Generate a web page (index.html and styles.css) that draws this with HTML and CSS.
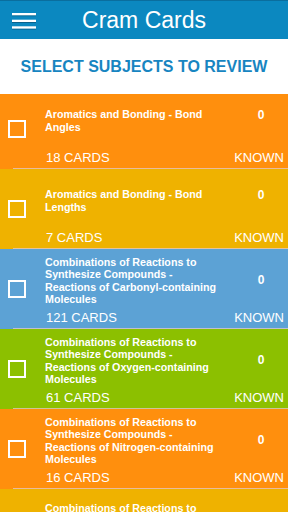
FILE: index.html
```html
<!DOCTYPE html>
<html>
<head>
<meta charset="utf-8">
<link rel="stylesheet" href="styles.css">
</head>
<body>
<header class="appbar">
  <div class="menu">
    <svg width="24" height="18" viewBox="0 0 24 18">
      <rect x="0" y="3.2" width="24" height="1" fill="#0a5f88"/>
      <rect x="0" y="9.9" width="24" height="1" fill="#0a5f88"/>
      <rect x="0" y="16.5" width="24" height="1" fill="#0a5f88"/>
      <rect x="0" y="1" width="24" height="2.3" fill="#fff"/>
      <rect x="0" y="7.7" width="24" height="2.3" fill="#fff"/>
      <rect x="0" y="14.3" width="24" height="2.3" fill="#fff"/>
    </svg>
  </div>
  <h1 class="title">Cram Cards</h1>
  <div class="spacer"></div>
</header>
<div class="subheader">SELECT SUBJECTS TO REVIEW</div>
<div class="list">
  <div class="card orange">
    <div class="check"><span class="box"></span></div>
    <div class="body">
      <div class="top">
        <div class="name">Aromatics and Bonding - Bond Angles</div>
        <div class="count count-short">0</div>
      </div>
      <div class="bottom"><span>18 CARDS</span><span>KNOWN</span></div>
    </div>
  </div>
  <div class="card yellow">
    <div class="check"><span class="box"></span></div>
    <div class="body">
      <div class="top">
        <div class="name">Aromatics and Bonding - Bond Lengths</div>
        <div class="count count-short">0</div>
      </div>
      <div class="bottom"><span>7 CARDS</span><span>KNOWN</span></div>
    </div>
  </div>
  <div class="card blue">
    <div class="check"><span class="box"></span></div>
    <div class="body">
      <div class="top">
        <div class="name">Combinations of Reactions to Synthesize Compounds - Reactions of Carbonyl-containing Molecules</div>
        <div class="count">0</div>
      </div>
      <div class="bottom"><span>121 CARDS</span><span>KNOWN</span></div>
    </div>
  </div>
  <div class="card green">
    <div class="check"><span class="box"></span></div>
    <div class="body">
      <div class="top">
        <div class="name">Combinations of Reactions to Synthesize Compounds - Reactions of Oxygen-containing Molecules</div>
        <div class="count">0</div>
      </div>
      <div class="bottom"><span>61 CARDS</span><span>KNOWN</span></div>
    </div>
  </div>
  <div class="card orange">
    <div class="check"><span class="box"></span></div>
    <div class="body">
      <div class="top">
        <div class="name">Combinations of Reactions to Synthesize Compounds - Reactions of Nitrogen-containing Molecules</div>
        <div class="count">0</div>
      </div>
      <div class="bottom"><span>16 CARDS</span><span>KNOWN</span></div>
    </div>
  </div>
  <div class="card yellow">
    <div class="check"><span class="box"></span></div>
    <div class="body">
      <div class="top">
        <div class="name">Combinations of Reactions to Synthesize Compounds - Stereochemistry</div>
        <div class="count">0</div>
      </div>
      <div class="bottom"><span>9 CARDS</span><span>KNOWN</span></div>
    </div>
  </div>
</div>
</body>
</html>
```

FILE: styles.css
```css
* { box-sizing: border-box; }
html, body {
  margin: 0;
  padding: 0;
  width: 288px;
  height: 512px;
  overflow: hidden;
  background: #ffffff;
  font-family: "Liberation Sans", Arial, Helvetica, sans-serif;
}
.appbar {
  height: 39px;
  background: #0b88c0;
  border-top: 1px solid #0a6e9e;
  display: grid;
  grid-template-columns: 48px 1fr 48px;
  align-items: center;
}
.menu {
  padding-left: 12px;
  display: flex;
  align-items: center;
  height: 100%;
  padding-top: 1px;
}
.menu svg { display: block; }
.title {
  margin: 0;
  text-align: center;
  color: #ffffff;
  font-weight: normal;
  font-size: 23px;
  line-height: 26px;
  margin-top: -1px;
}
.subheader {
  height: 55px;
  display: flex;
  align-items: center;
  justify-content: center;
  padding-top: 1px;
  color: #1785c1;
  font-weight: bold;
  font-size: 16px;
}
.list {
  overflow: hidden;
  height: 418px;
}
.card {
  height: 80px;
  display: flex;
  position: relative;
  color: #ffffff;
}
.card:first-child { margin-top: -5px; }
.card::after {
  content: "";
  position: absolute;
  left: 13px;
  right: 0;
  bottom: 0;
  height: 1px;
  background: rgba(225, 200, 205, 0.75);
}
.orange { background: #ff8f0d; }
.yellow { background: #efb200; }
.blue { background: #5ca2d5; }
.green { background: #8cc000; }
.check {
  width: 45px;
  flex: 0 0 45px;
  display: flex;
  align-items: center;
  padding-left: 8px;
  padding-bottom: 1px;
}
.box {
  width: 18px;
  height: 18px;
  border: 2px solid #ffffff;
}
.body {
  flex: 1;
  display: flex;
  flex-direction: column;
  padding-right: 4px;
}
.top {
  height: 63px;
  display: flex;
  align-items: center;
}
.name {
  width: 176px;
  font-weight: bold;
  font-size: 10.7px;
  line-height: 12.3px;
}
.count {
  margin-left: auto;
  width: 46px;
  text-align: center;
  font-weight: bold;
  font-size: 12px;
  line-height: 12.3px;
}
.count-short {
  align-self: flex-start;
  margin-top: 20px;
}
.bottom {
  display: flex;
  justify-content: space-between;
  font-size: 13px;
  line-height: 11px;
  padding-left: 1px;
}
```
